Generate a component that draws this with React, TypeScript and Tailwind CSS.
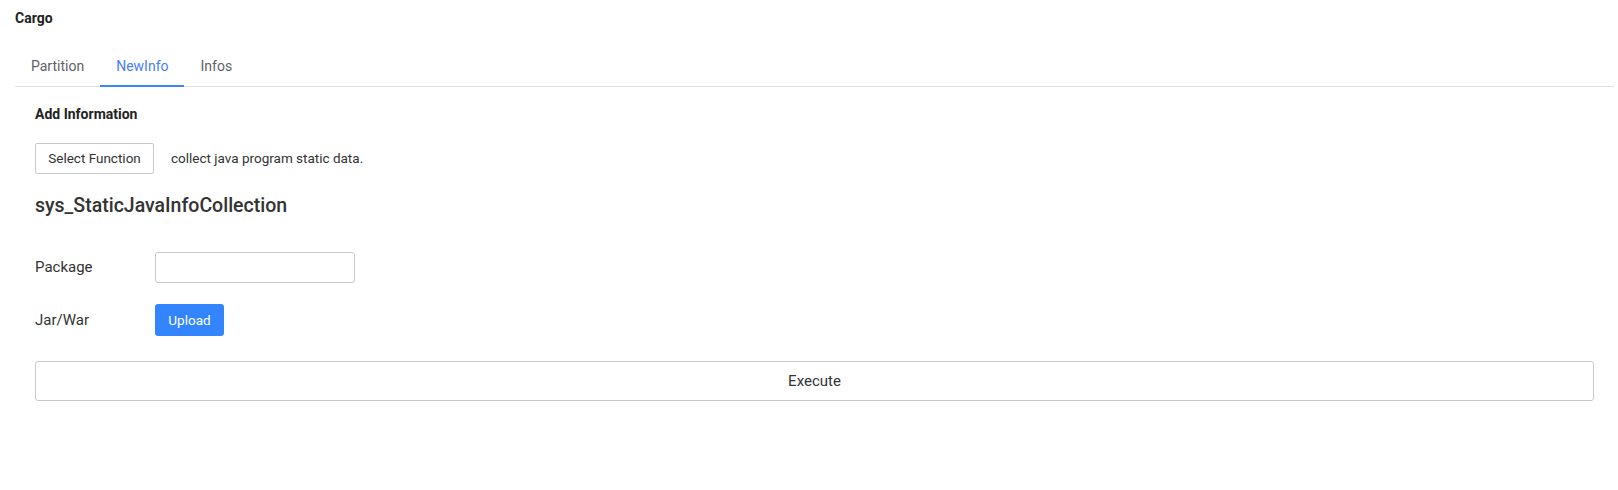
import { useState } from 'react';

const tabs = ['Partition', 'NewInfo', 'Infos'];

export default function App() {
  const [active, setActive] = useState('NewInfo');

  return (
    <div className="min-h-[490px] bg-white pl-[15px] pr-[4px] font-['Roboto',sans-serif] text-[#303133]">
      <div className="pt-[8px] text-[14px] font-bold leading-[20px] text-[#222]">Cargo</div>

      <div className="mt-[18px] flex border-b border-[#e0e0e6]">
        {tabs.map((t) => {
          const isActive = t === active;
          return (
            <button
              key={t}
              type="button"
              onClick={() => setActive(t)}
              className={`relative h-[40px] px-4 text-[14px] leading-[20px] ${
                isActive ? 'text-[#4a7df8]' : 'text-[#5f6166]'
              }`}
            >
              {t}
              {isActive && (
                <span className="absolute bottom-[-1px] left-0 right-0 h-[2px] bg-[#3a84ff]" />
              )}
            </button>
          );
        })}
      </div>

      <div className="px-5">
        <div className="pt-[17px] text-[14px] font-bold leading-[20px] text-[#222]">
          Add Information
        </div>

        <div className="mt-[19px] flex items-center gap-[17px]">
          <button
            type="button"
            className="h-[31px] w-[119px] rounded-[2px] border border-[#c9cace] bg-white text-[13.5px] text-[#333]"
          >
            Select Function
          </button>
          <span className="text-[13.5px] text-[#333]">collect java program static data.</span>
        </div>

        <div className="mt-[20px] text-[19.5px] font-medium leading-[24px] text-[#333]">
          sys_StaticJavaInfoCollection
        </div>

        <div className="mt-[34px] flex items-center">
          <label className="w-[120px] text-[15px] text-[#333]">Package</label>
          <input
            type="text"
            className="h-[31px] w-[200px] rounded-[3px] border border-[#c9cace] px-2 text-[13px] outline-none"
          />
        </div>

        <div className="mt-[21px] flex items-center">
          <span className="w-[120px] text-[15px] text-[#333]">Jar/War</span>
          <button
            type="button"
            className="h-[32px] w-[69px] rounded-[3px] bg-[#3385ff] text-[13.5px] text-white"
          >
            Upload
          </button>
        </div>

        <button
          type="button"
          className="mt-[25px] h-[40px] w-full rounded-[3px] border border-[#c9cace] bg-white text-[15px] text-[#333]"
        >
          Execute
        </button>
      </div>
    </div>
  );
}
